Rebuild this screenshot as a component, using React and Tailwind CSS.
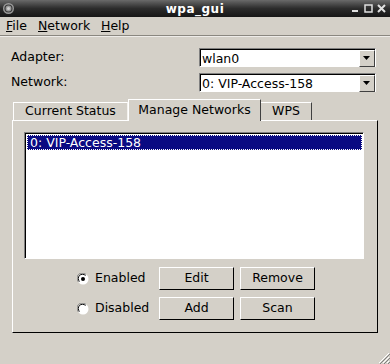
import React from "react";

function Combo({ value }) {
  return (
    <div className="flex h-[19px] w-[177px] border-t border-l border-t-[#808080] border-l-[#808080] border-b border-r border-b-white border-r-white">
      <div className="flex flex-1 border-t border-l border-t-black border-l-black bg-white">
        <div className="flex-1 pl-[1px] leading-[17px] text-black">{value}</div>
        <div className="flex h-[17px] w-[16px] items-center justify-center border-r border-b border-r-[#404040] border-b-[#404040] border-t border-l border-t-white border-l-white bg-[#d4d0c8]">
          <svg width="8" height="5" viewBox="0 0 8 5">
            <polygon points="0,0 7,0 3.5,4" fill="#000" />
          </svg>
        </div>
      </div>
    </div>
  );
}

function Btn({ children }) {
  return (
    <div className="flex h-[23px] w-[75px] items-center justify-center border-t border-l border-t-white border-l-white border-b border-r border-b-black border-r-black bg-[#d4d0c8] text-black">
      {children}
    </div>
  );
}

function Radio({ checked, label }) {
  return (
    <div className="flex items-center gap-[6px]">
      <svg width="12" height="12" viewBox="0 0 12 12">
        <circle cx="6" cy="6" r="5.5" fill="#fff" />
        <path d="M1.5 9 A5 5 0 0 1 9 1.5" stroke="#808080" strokeWidth="1" fill="none" />
        <path d="M2.5 8.5 A4 4 0 0 1 8.5 2.5" stroke="#000" strokeWidth="1" fill="none" />
        {checked && <circle cx="6" cy="6" r="2" fill="#000" />}
      </svg>
      <span>{label}</span>
    </div>
  );
}

export default function App() {
  return (
    <div
      className="relative flex h-[364px] w-[390px] flex-col overflow-hidden bg-[#d4d0c8] text-[12.5px] text-black"
      style={{ fontFamily: '"DejaVu Sans", sans-serif' }}
    >
      {/* Title bar */}
      <div className="relative flex h-[17px] items-center justify-center bg-gradient-to-b from-[#6a6a6a] via-[#2c2c2c] to-[#161616]">
        <svg className="absolute left-[2px] top-[2px]" width="13" height="13" viewBox="0 0 13 13">
          <circle cx="6.5" cy="6.5" r="5.5" fill="#9a9a9a" />
          <circle cx="6.5" cy="6.5" r="3.5" fill="none" stroke="#3a3a3a" strokeWidth="1.2" />
          <circle cx="6.5" cy="6.5" r="1.5" fill="#cfcfcf" />
        </svg>
        <span className="text-[12px] font-bold tracking-[0.5px] text-white">wpa_gui</span>
        <div className="absolute right-[4px] top-[4px] flex items-center gap-[4px]">
          <svg width="9" height="9" viewBox="0 0 9 9">
            <rect x="1" y="6" width="6" height="2" fill="#e0e0e0" />
          </svg>
          <svg width="9" height="9" viewBox="0 0 9 9">
            <rect x="1" y="1" width="7" height="7" fill="none" stroke="#e0e0e0" strokeWidth="1.5" />
          </svg>
          <svg width="9" height="9" viewBox="0 0 9 9">
            <path d="M1 1 L8 8 M8 1 L1 8" stroke="#e0e0e0" strokeWidth="2" />
          </svg>
        </div>
      </div>

      {/* Menu bar */}
      <div className="flex h-[19px] items-center border-b border-b-[#8a8780] pl-[6px] pt-[1px]">
        <span className="w-[32px]"><span className="underline">F</span>ile</span>
        <span className="w-[63px]"><span className="underline">N</span>etwork</span>
        <span><span className="underline">H</span>elp</span>
      </div>
      <div className="h-px bg-white/60" />

      {/* Form rows */}
      <div className="mt-[11px] flex flex-col gap-[6px] pl-[11px] pr-[14px]">
        <div className="flex items-center justify-between">
          <span>Adapter:</span>
          <Combo value="wlan0" />
        </div>
        <div className="flex items-center justify-between">
          <span>Network:</span>
          <Combo value="0: VIP-Access-158" />
        </div>
      </div>

      {/* Tabs */}
      <div className="mt-[6px] flex h-[22px] items-end pl-[13px]">
        <div className="flex h-[18px] w-[115px] items-center justify-center border-t border-l border-r border-t-white border-l-white border-r-[#f4f2ee]">
          Current Status
        </div>
        <div className="relative z-10 -mb-px flex h-[22px] w-[133px] items-center justify-center border-t border-l border-r border-t-white border-l-white border-r-[#404040] bg-[#d4d0c8]">
          Manage Networks
        </div>
        <div className="flex h-[18px] w-[51px] items-center justify-center border-t border-r border-t-white border-r-[#404040]">
          WPS
        </div>
      </div>

      {/* Panel */}
      <div className="ml-[12px] flex h-[213px] w-[366px] flex-col border-t border-l border-t-white border-l-white border-r border-b border-r-black border-b-black">
        <div className="ml-[11px] mt-[11px] h-[127px] w-[340px] border-t border-l border-t-[#808080] border-l-[#808080] border-b border-r border-b-white border-r-white">
          <div className="h-full w-full border-t border-l border-t-black border-l-black bg-white">
            <div className="mx-[1px] mt-[1px] h-[15px] border border-dotted border-white bg-[#0a0a82] pl-[2px] leading-[13px] text-white">
              0: VIP-Access-158
            </div>
          </div>
        </div>

        <div className="mt-[8px] flex flex-col gap-[7px]">
          <div className="flex items-center">
            <div className="ml-[64px] w-[82px]">
              <Radio checked label="Enabled" />
            </div>
            <Btn>Edit</Btn>
            <div className="ml-[6px]">
              <Btn>Remove</Btn>
            </div>
          </div>
          <div className="flex items-center">
            <div className="ml-[64px] w-[82px]">
              <Radio label="Disabled" />
            </div>
            <Btn>Add</Btn>
            <div className="ml-[6px]">
              <Btn>Scan</Btn>
            </div>
          </div>
        </div>
      </div>

      {/* Resize grip */}
      <svg className="absolute bottom-0 right-0" width="13" height="13" viewBox="0 0 13 13">
        <path d="M12 2 L2 12 M12 6 L6 12 M12 10 L10 12" stroke="#ffffff" strokeWidth="1" />
        <path d="M13 3 L3 13 M13 7 L7 13 M13 11 L11 13" stroke="#808080" strokeWidth="1" />
      </svg>
    </div>
  );
}
